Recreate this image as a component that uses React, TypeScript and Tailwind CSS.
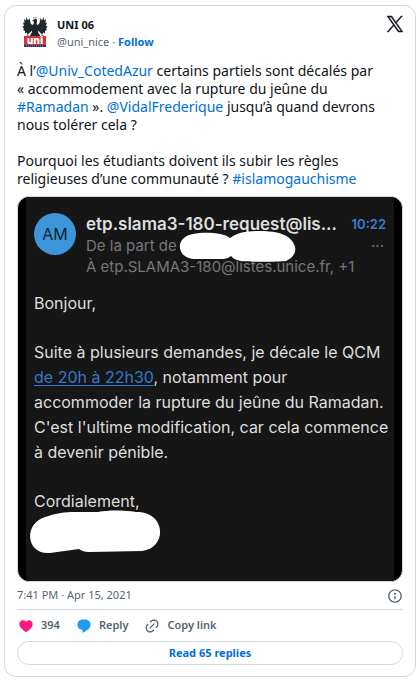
import type { ReactNode } from "react";

const textFont = "font-['Segoe_UI','Noto_Sans',sans-serif]";
const mailFont = "font-[Inter,'Liberation_Sans',sans-serif]";

function TextLink({ children }: { children: ReactNode }) {
  return (
    <a href="#" className="text-[#006fd6] hover:underline">
      {children}
    </a>
  );
}

function Avatar() {
  return (
    <svg viewBox="0 0 32 36" className="h-9 w-8 shrink-0" role="img" aria-label="UNI 06">
      <g fill="#20282b">
        <path d="M17 3.500C18.500 2 20.500 3 20 5.500L19.500 8 22 10 21 16 23.500 20.500H12.500L15 16 14 10 16.500 8 17 5.500 15 5z" />
        <path d="M15.500 9.500L13.500 7 12.500 2 11 4.500 9.500 1 9 4.500 7 3 7.500 7 6 6.500 7 10 5.500 10.500 7 13 6 14 8 15 8 17.500 10 16.500 10.500 19 15.500 14z" />
        <path d="M20.500 9.500L22.500 7 23.500 2 25 4.500 26.500 1 27 4.500 29 3 28.500 7 30 6.500 29 10 30.500 10.500 29 13 30 14 28 15 28 17.500 26 16.500 25.500 19 20.500 14z" />
      </g>
      <path d="M16.500 2.500L16 .5l2 1 2-1-.5 2z" fill="#b6a36f" />
      <path d="M8 20.500l3-2 1.500 2zM23.500 20.500l1.500-2 3 2z" fill="#8d8b82" />
      <rect x="7" y="20" width="22" height="9" fill="#d6323b" />
      <text
        x="18"
        y="28"
        textAnchor="middle"
        className="font-['Open_Sans',sans-serif] text-[10px] font-extrabold"
        fill="#fff"
      >
        uni
      </text>
      <rect x="7" y="29" width="22" height="2" fill="#27385c" />
      <path d="M9 30h18" stroke="#8290ac" strokeWidth="1" strokeDasharray="1 1" />
    </svg>
  );
}

function XLogo() {
  return (
    <svg viewBox="0 0 24 24" className="size-4 overflow-visible" fill="#0f1419" stroke="#0f1419" strokeWidth="0.8" aria-hidden="true">
      <path d="M14.258 10.152L23.176 0h-2.113l-7.747 8.813L7.133 0H0l9.352 13.328L0 23.973h2.113l8.176-9.309 6.531 9.309h7.133zm-2.895 3.293l-.949-1.328L2.875 1.560h3.246l6.086 8.523.945 1.328 7.91 11.078h-3.246z" />
    </svg>
  );
}

function HeartIcon() {
  return (
    <svg viewBox="0 0 24 24" className="size-4" fill="#f91880" aria-hidden="true">
      <path d="M20.884 13.190c-1.351 2.480-4.001 5.120-8.379 7.670l-.503.300-.504-.300c-4.379-2.550-7.029-5.190-8.382-7.670-1.360-2.500-1.410-4.860-.514-6.670.887-1.790 2.647-2.910 4.601-3.010 1.651-.090 3.368.560 4.798 2.010 1.429-1.450 3.146-2.100 4.796-2.010 1.954.100 3.714 1.220 4.601 3.010.896 1.810.846 4.170-.514 6.670z" />
    </svg>
  );
}

function ReplyIcon() {
  return (
    <svg viewBox="0 0 24 24" className="size-4" fill="#1d9bf0" aria-hidden="true">
      <path d="M14.046 2.242l-4.148-.010h-.002c-4.374 0-7.800 3.427-7.800 7.802 0 4.098 3.186 7.206 7.465 7.370v3.828c0 .108.044.286.120.403.142.225.384.347.632.347.138 0 .277-.038.402-.118.264-.168 6.473-4.140 8.088-5.506 1.902-1.610 3.040-3.970 3.043-6.312v-.017c-.006-4.367-3.430-7.787-7.800-7.788z" />
    </svg>
  );
}

function LinkIcon() {
  return (
    <svg viewBox="0 0 24 24" className="size-4" fill="#536471" aria-hidden="true">
      <path d="M18.360 5.640c-1.950-1.960-5.110-1.960-7.070 0L9.880 7.050 8.460 5.640l1.420-1.420c2.730-2.730 7.160-2.730 9.900 0 2.730 2.740 2.730 7.170 0 9.900l-1.420 1.420-1.410-1.420 1.410-1.410c1.960-1.960 1.960-5.120 0-7.070zm-2.120 3.530l-7.070 7.070-1.410-1.410 7.070-7.070 1.410 1.410zm-12.020.710l1.420-1.420 1.410 1.420-1.410 1.410c-1.960 1.960-1.960 5.120 0 7.070 1.950 1.960 5.110 1.960 7.070 0l1.410-1.410 1.420 1.410-1.420 1.420c-2.730 2.730-7.160 2.730-9.900 0-2.730-2.740-2.730-7.170 0-9.900z" />
    </svg>
  );
}

function InfoIcon() {
  return (
    <svg viewBox="0 0 24 24" className="size-4" fill="#536471" aria-hidden="true">
      <path d="M13.500 8.500c0 .830-.670 1.500-1.500 1.500s-1.500-.670-1.500-1.500S11.170 7 12 7s1.500.670 1.500 1.500zM13 17v-5h-2v5h2zm-1 5.250c5.660 0 10.250-4.590 10.250-10.250S17.660 1.750 12 1.750 1.750 6.340 1.750 12 6.340 22.250 12 22.250zM20.250 12c0 4.560-3.690 8.250-8.250 8.250S3.750 16.560 3.750 12 7.440 3.750 12 3.750s8.250 3.690 8.250 8.250z" />
    </svg>
  );
}

function MailPicture() {
  return (
    <div className="overflow-hidden rounded-xl border border-[#cfd9de] bg-black">
      <div className={`mx-2 h-96 bg-[#161616] px-2 pt-4 text-[#dedede] ${mailFont}`}>
        <div className="flex gap-2.5">
          <div className="flex size-[42px] shrink-0 items-center justify-center rounded-full bg-[#3c96d9] text-base text-[#14202c]">
            AM
          </div>
          <div className="min-w-0 flex-1">
            <div className="flex items-center justify-between leading-[22px]">
              <span className="truncate text-[17px] font-semibold">etp.slama3-180-request@lis...</span>
              <span className="shrink-0 text-[13px] font-semibold text-[#3580d2]">10:22</span>
            </div>
            <div className="relative flex items-center justify-between text-[15px] leading-[21px] text-[#77777a]">
              <span>De la part de</span>
              <span className="pr-0.5">···</span>
              <svg viewBox="0 0 120 32" className="absolute -top-1 left-[92px] h-8 w-[120px]" fill="#fff" aria-hidden="true">
                <path d="M15 3C25 1 45 1 52 7C60 1 70 0 82 0C95 0 104 2 110 6C121 15 119 25 108 30C99 31 72 31 63 30C57 29 55 27 53 25C49 29 43 28 35 28H15C-2 26-3 6 15 3Z" />
              </svg>
            </div>
            <div className="text-[15px] leading-[21px] text-[#77777a]">À etp.SLAMA3-180@listes.unice.fr, +1</div>
          </div>
        </div>
        <div className="mt-3.5 text-base leading-[25px] whitespace-nowrap">
          <p>Bonjour,</p>
          <p className="mt-6">
            Suite à plusieurs demandes, je décale le QCM
            <br />
            <a href="#" className="text-[#3479cd] underline underline-offset-2">
              de 20h à 22h30
            </a>
            , notamment pour
            <br />
            accommoder la rupture du jeûne du Ramadan.
            <br />
            C&apos;est l&apos;ultime modification, car cela commence
            <br />à devenir pénible.
          </p>
          <p className="mt-6">Cordialement,</p>
        </div>
        <svg viewBox="0 0 132 44" className="-mt-1 -ml-1 h-11 w-[132px]" fill="#fff" aria-hidden="true">
          <path d="M15 7C27 3 34 2 46 2H68C78 0 94 0 106 2C136 1 138 38 112 41L60 42C54 42 52 41 49 39L20 43C-4 45-7 14 15 7Z" />
        </svg>
      </div>
    </div>
  );
}

export default function App() {
  return (
    <main className={`bg-white pt-[5px] pr-[3px] pb-[3px] pl-1 ${textFont}`}>
      <article className="rounded-xl border border-[#cfd9de] px-3 pt-2.5 pb-[11px] text-[#0f1419]">
        <header className="flex items-start">
          <Avatar />
          <div className="ml-2 flex-1 text-[11px] leading-[17px]">
            <a href="#" className="block font-bold">
              UNI 06
            </a>
            <div className="text-[#536471]">
              @uni_nice ·{" "}
              <a href="#" className="font-bold text-[#006fd6]">
                Follow
              </a>
            </div>
          </div>
          <a href="#" aria-label="View on X">
            <XLogo />
          </a>
        </header>

        <div className="mt-2.5 text-[14px] leading-[18px] whitespace-nowrap">
          <p>
            À l’<TextLink>@Univ_CotedAzur</TextLink> certains partiels sont décalés par
            <br />« accommodement avec la rupture du jeûne du
            <br />
            <TextLink>#Ramadan</TextLink> ». <TextLink>@VidalFrederique</TextLink> jusqu’à quand devrons
            <br />
            nous tolérer cela ?
          </p>
          <p className="mt-[18px] mb-2">
            Pourquoi les étudiants doivent ils subir les règles
            <br />
            religieuses d’une communauté ? <TextLink>#islamogauchisme</TextLink>
          </p>
        </div>

        <MailPicture />

        <div className="flex h-7 items-center justify-between border-b border-[#cfd9de] text-[11px] text-[#536471]">
          <time dateTime="2021-04-15T19:41">7:41 PM · Apr 15, 2021</time>
          <button type="button" aria-label="Information">
            <InfoIcon />
          </button>
        </div>

        <div className="flex h-[31px] items-center gap-4 pl-px text-[11px] font-semibold text-[#536471]">
          <button type="button" className="flex items-center gap-[7px]">
            <HeartIcon />
            394
          </button>
          <button type="button" className="flex items-center gap-[7px]">
            <ReplyIcon />
            Reply
          </button>
          <button type="button" className="flex items-center gap-[7px]">
            <LinkIcon />
            Copy link
          </button>
        </div>

        <button
          type="button"
          className="block h-6 w-full rounded-full border border-[#cfd9de] text-[11px] leading-[22px] font-bold text-[#006fd6]"
        >
          Read 65 replies
        </button>
      </article>
    </main>
  );
}
